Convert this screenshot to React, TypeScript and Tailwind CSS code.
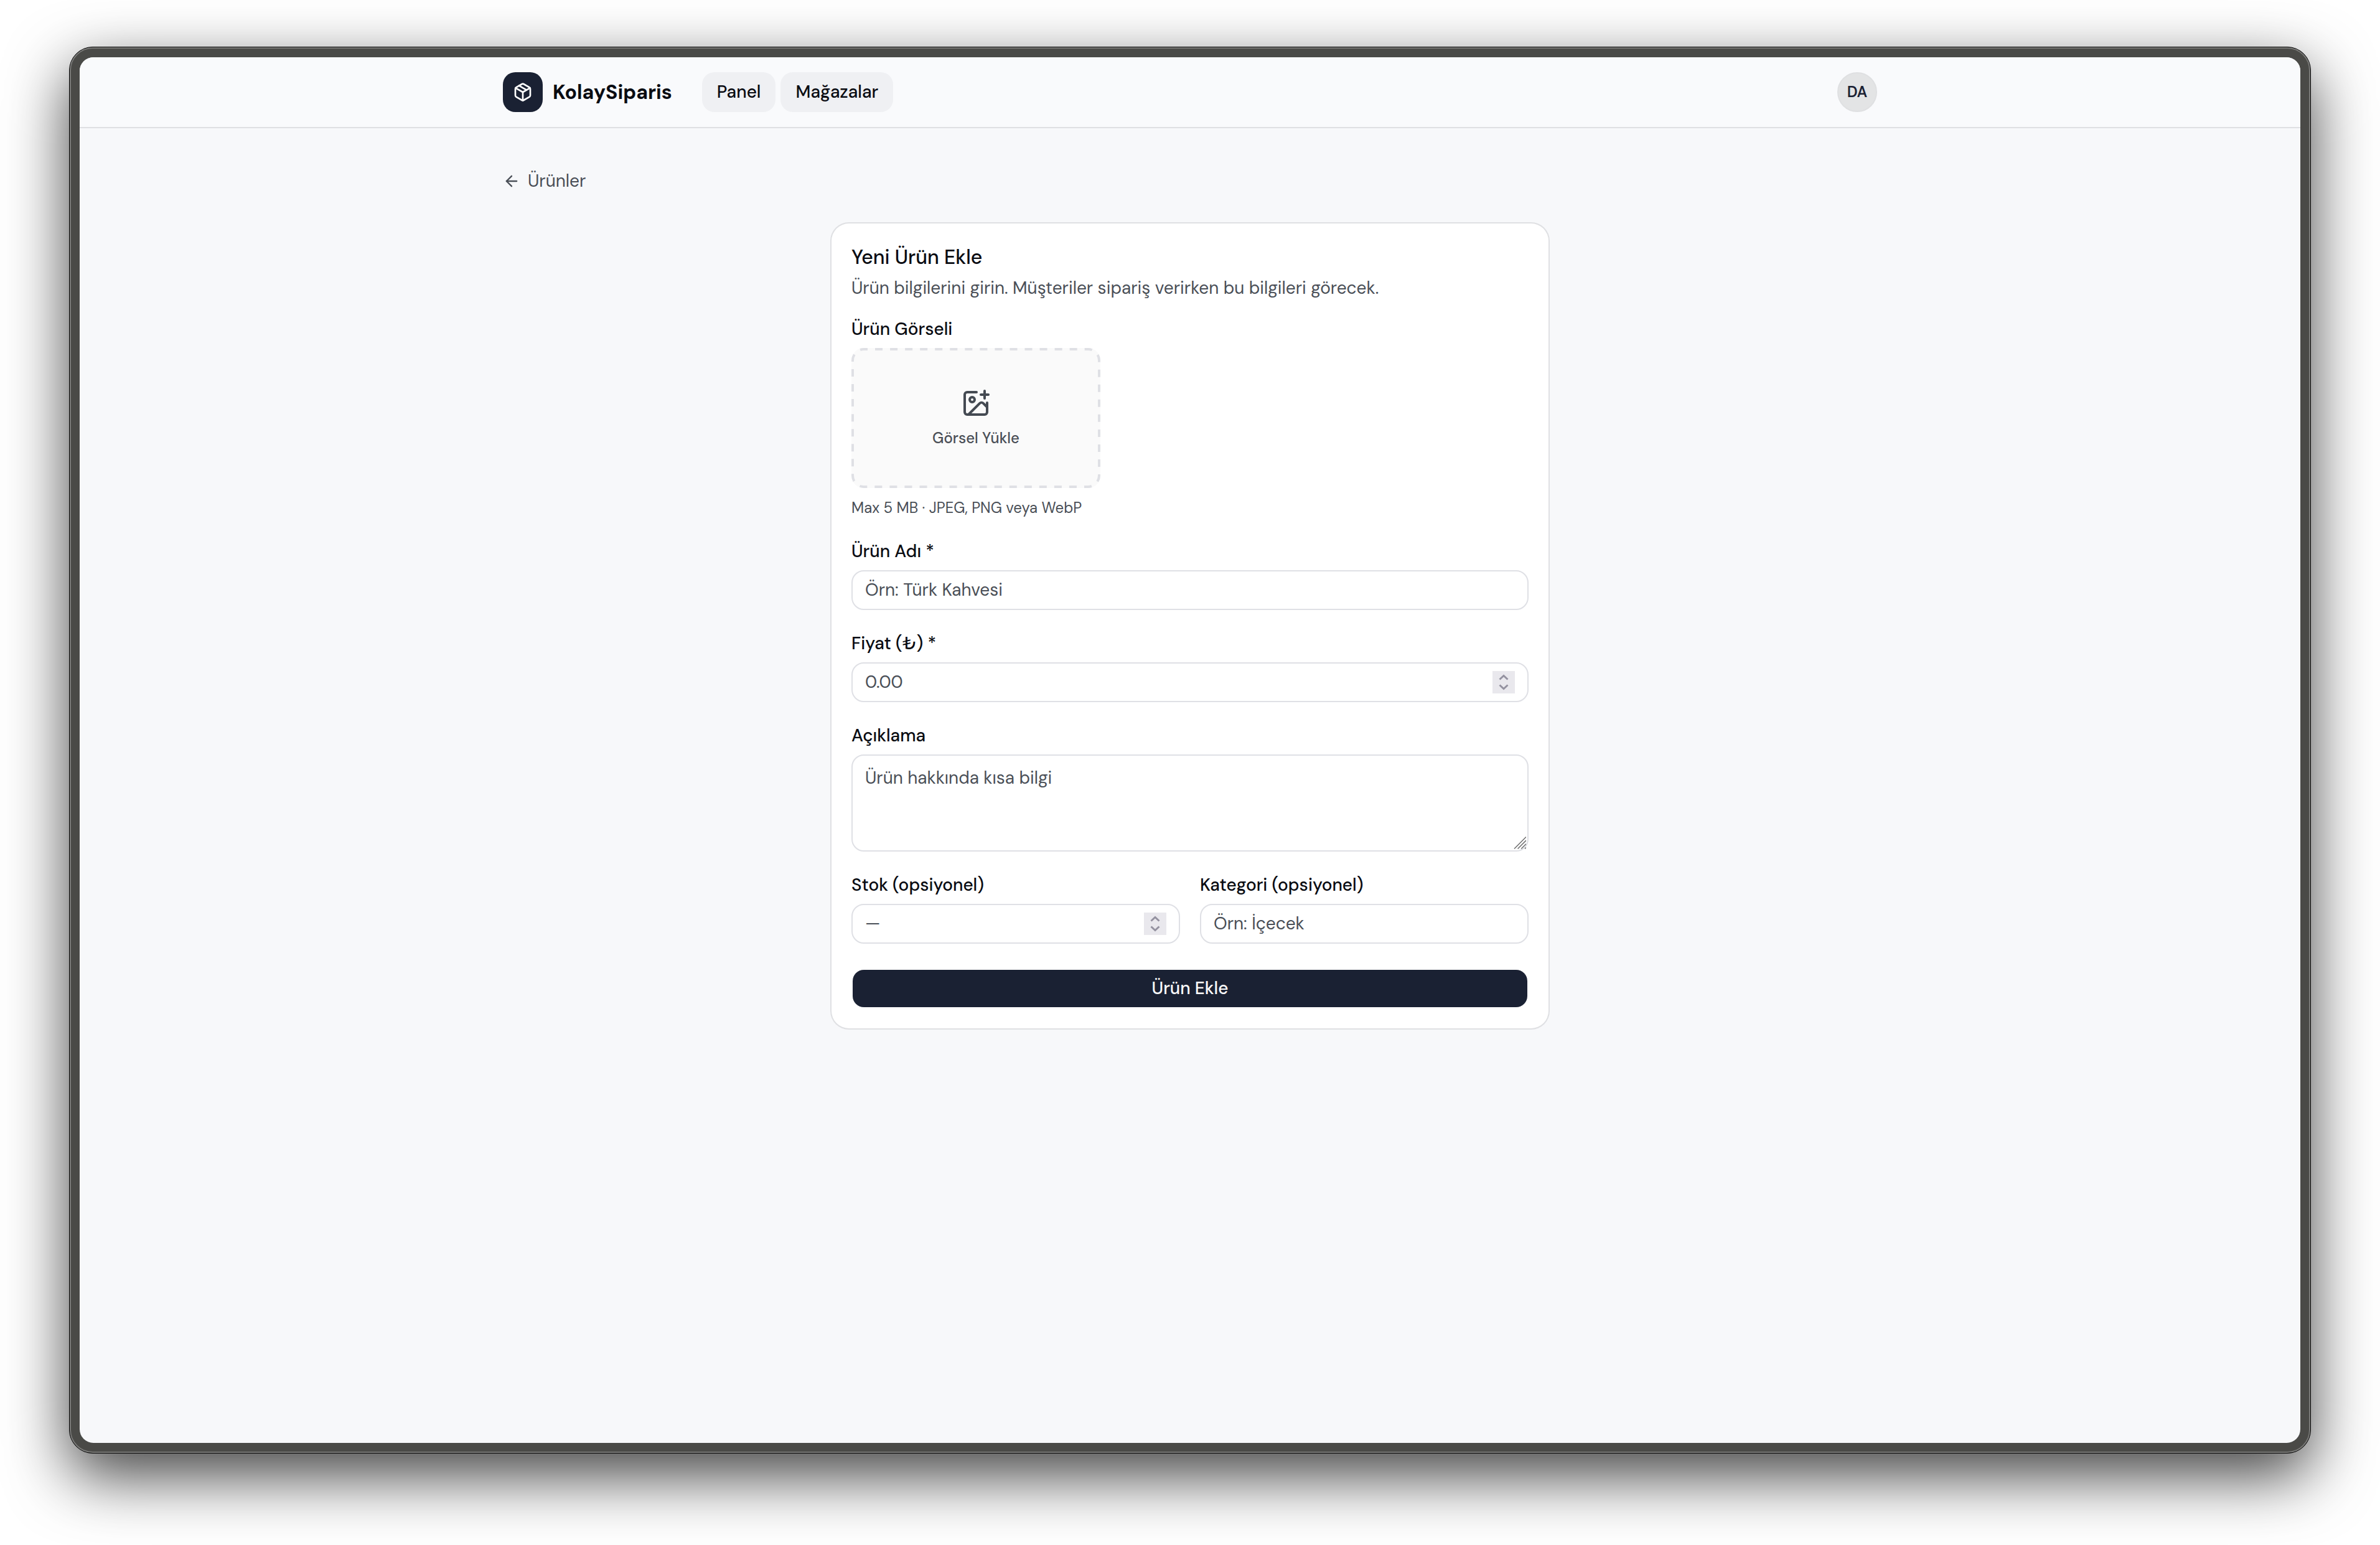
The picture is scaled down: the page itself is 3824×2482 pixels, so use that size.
import type { ReactNode } from 'react';
import { ArrowLeft, ImagePlus, Package } from 'lucide-react';

const controlText =
  'min-w-0 flex-1 bg-transparent text-[28px] leading-10 text-[#0a0c12] outline-none placeholder:text-[#4a4f57] placeholder:opacity-100';

function Field({ id, label, children }: { id: string; label: string; children: ReactNode }) {
  return (
    <div className="flex min-w-0 flex-col gap-4">
      <label htmlFor={id} className="text-[28px] leading-7 font-medium">
        {label}
      </label>
      {children}
    </div>
  );
}

function Spinner() {
  return (
    <svg aria-hidden="true" viewBox="0 0 36 36" className="size-9 shrink-0 bg-[#e9e8ed]" fill="none" stroke="#9492a0" strokeWidth="3">
      <path d="M11.5 13.5 18 7.5l6.5 6M11.5 22.5l6.5 6 6.5-6" />
    </svg>
  );
}

function TextInput({ id, type = 'text', placeholder }: { id: string; type?: 'text' | 'number'; placeholder: string }) {
  return (
    <div className="flex h-16 items-center rounded-[20px] border-2 border-[#dfe0e5] px-5">
      <input
        id={id}
        type={type}
        placeholder={placeholder}
        className={`${controlText} [appearance:textfield] [&::-webkit-inner-spin-button]:appearance-none`}
      />
      {type === 'number' && <Spinner />}
    </div>
  );
}

function TextArea({ id, placeholder }: { id: string; placeholder: string }) {
  return (
    <div className="relative flex rounded-[20px] border-2 border-[#dfe0e5] px-5 py-4">
      <textarea id={id} rows={3} placeholder={placeholder} className={`${controlText} resize-none`} />
      <svg
        aria-hidden="true"
        viewBox="0 0 20 20"
        className="absolute right-0.5 bottom-0.5 size-5"
        stroke="#6f6f6f"
        strokeWidth="1.5"
      >
        <path d="M1 19.5 20 .5M6.6 19.5 20 6.1M12.2 19.5 20 11.7M18 19.5l2-2" />
      </svg>
    </div>
  );
}

function Header() {
  return (
    <header className="border-b-2 border-[#dfe0e3] bg-[#f9fafc]">
      <div className="mx-auto flex h-28 w-full max-w-[2304px] items-center justify-between px-12">
        <div className="flex items-center gap-12">
          <a href="#" className="flex items-center gap-4 text-[32px] leading-10 font-bold">
            <span className="flex size-16 items-center justify-center rounded-[20px] bg-[#1a2133] text-white">
              <Package className="size-8" />
            </span>
            KolaySiparis
          </a>
          <nav className="flex gap-2 text-[28px] leading-10 font-medium">
            <a href="#" className="flex h-16 items-center rounded-[20px] bg-[#eff0f3] px-6">
              Panel
            </a>
            <a href="#" className="flex h-16 items-center rounded-[20px] bg-[#eff0f3] px-6">
              Mağazalar
            </a>
          </nav>
        </div>
        <button
          type="button"
          className="flex size-16 items-center justify-center rounded-full border-2 border-[#dfe0e2] bg-[#e3e4e5] text-2xl font-semibold text-[#1a2133]"
        >
          DA
        </button>
      </div>
    </header>
  );
}

function ImageUpload({ id }: { id: string }) {
  return (
    <button
      id={id}
      type="button"
      className="relative flex aspect-video w-[400px] flex-col items-center justify-center gap-4 rounded-[20px] bg-[#fafafa] text-2xl font-medium text-[#4a4f57]"
    >
      <svg
        aria-hidden="true"
        viewBox="0 0 400 225"
        className="absolute inset-0 size-full"
        fill="none"
        stroke="#dfe0e5"
        strokeWidth="4"
      >
        <rect x="2" y="2" width="396" height="221" rx="18" pathLength="1200" strokeDasharray="12 12" strokeDashoffset="6" />
      </svg>
      <ImagePlus className="size-12 text-[#444a52]" />
      Görsel Yükle
    </button>
  );
}

function ProductForm() {
  return (
    <section className="mx-auto w-full max-w-[1152px] rounded-[28px] bg-white p-8 ring-2 ring-[#dfe0e3]">
      <h1 className="text-[32px] leading-[44px] font-medium">Yeni Ürün Ekle</h1>
      <p className="mt-2 text-[28px] leading-10 text-[#4a4f57]">
        Ürün bilgilerini girin. Müşteriler sipariş verirken bu bilgileri görecek.
      </p>
      <form className="mt-8 flex flex-col gap-10">
        <Field id="image" label="Ürün Görseli">
          <ImageUpload id="image" />
          <p className="text-2xl text-[#4a4f57]">Max 5 MB · JPEG, PNG veya WebP</p>
        </Field>
        <Field id="name" label="Ürün Adı *">
          <TextInput id="name" placeholder="Örn: Türk Kahvesi" />
        </Field>
        <Field id="price" label="Fiyat (₺) *">
          <TextInput id="price" type="number" placeholder="0.00" />
        </Field>
        <Field id="description" label="Açıklama">
          <TextArea id="description" placeholder="Ürün hakkında kısa bilgi" />
        </Field>
        <div className="grid grid-cols-2 gap-8">
          <Field id="stock" label="Stok (opsiyonel)">
            <TextInput id="stock" type="number" placeholder="—" />
          </Field>
          <Field id="category" label="Kategori (opsiyonel)">
            <TextInput id="category" placeholder="Örn: İçecek" />
          </Field>
        </div>
        <button
          type="submit"
          className="h-16 rounded-[20px] border-2 border-transparent bg-[#1a2133] bg-clip-padding text-[28px] leading-10 font-medium text-[#fafafa]"
        >
          Ürün Ekle
        </button>
      </form>
    </section>
  );
}

export default function App() {
  return (
    <div className="flex min-h-screen flex-col bg-white px-[111px] pt-[75px] pb-[147px] font-['DM_Sans','Inter',sans-serif] text-[#0a0c12]">
      <div className="flex flex-1 flex-col rounded-[38px] border border-black bg-black shadow-[0_36px_100px_rgba(0,0,0,0.74)]">
        <div className="flex flex-1 flex-col rounded-[37px] border-2 border-[#7a7a78] bg-[#4a4a47] p-3.5">
          <div className="flex flex-1 flex-col overflow-hidden rounded-[22px] bg-[#f7f8fa]">
            <Header />
            <main className="mx-auto w-full max-w-[2304px] flex-1 px-12 pt-[65px] pb-16">
              <a href="#" className="mb-12 flex w-fit items-center gap-3 text-[28px] leading-10 text-[#4a4f57]">
                <ArrowLeft className="size-7" />
                Ürünler
              </a>
              <ProductForm />
            </main>
          </div>
        </div>
      </div>
    </div>
  );
}
